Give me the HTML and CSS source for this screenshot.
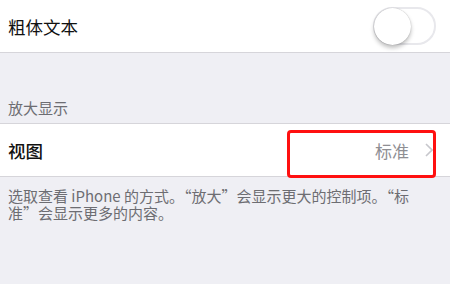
FILE: index.html
```html
<!DOCTYPE html>
<html lang="zh-CN">
<head>
    <meta charset="UTF-8">
    <meta name="viewport" content="width=device-width, initial-scale=1.0">
    <title>显示设置</title>
    <link rel="stylesheet" href="styles.css">
</head>
<body>

    <div class="cell">
        <span class="label">粗体文本</span>
        <div class="switch"><div class="knob"></div></div>
    </div>

    <div class="group-title">放大显示</div>

    <div class="cell cell-top">
        <span class="label strong">视图</span>
        <span class="value">标准</span>
        <svg class="chevron" width="8" height="14" viewBox="0 0 8 14">
            <path d="M1 1 L7 7 L1 13" fill="none" stroke="#c7c7cc" stroke-width="1.6"/>
        </svg>
        <div class="mark"></div>
    </div>

    <div class="group-note">选取查看 iPhone 的方式。“放大”会显示更大的控制项。“标准”会显示更多的内容。</div>

</body>
</html>
```

FILE: styles.css
```css
body {
    margin: 0;
    background-color: #efeff4;
    font-family: "Noto Sans CJK SC", "Noto Sans", sans-serif;
    height: 284px;
    overflow: hidden;
}
.cell {
    position: relative;
    display: flex;
    align-items: center;
    height: 52px;
    padding: 0 14px 0 8px;
    background: white;
    border-bottom: 1px solid #d6d5da;
}
.cell-top {
    border-top: 1px solid #d6d5da;
}
.label {
    flex: 1;
    font-size: 17.5px;
    color: #111;
}
.strong {
    font-weight: 500;
}
.value {
    font-size: 17px;
    color: #8e8e93;
    margin-right: 16px;
}
.chevron {
    margin-right: 3px;
}
.switch {
    width: 59px;
    height: 34px;
    border: 2px solid #e8e8ec;
    border-radius: 19px;
    position: relative;
}
.knob {
    width: 37px;
    height: 37px;
    border-radius: 50%;
    background: white;
    margin: -1.5px 0 0 -1.5px;
    box-shadow: 0 3px 4px rgba(0, 0, 0, 0.25), 0 0 1px rgba(0, 0, 0, 0.3);
}
.group-title {
    height: 70px;
    padding: 0 8px 5px;
    box-sizing: border-box;
    display: flex;
    align-items: flex-end;
    font-size: 15px;
    line-height: 20px;
    color: #6d6d72;
}
.group-note {
    padding: 10px 30px 0 8px;
    font-size: 15px;
    line-height: 17px;
    color: #6d6d72;
}
.mark {
    position: absolute;
    left: 287px;
    top: 6px;
    width: 143px;
    height: 42px;
    border: 3px solid #ff1010;
    border-radius: 4px;
}
```
